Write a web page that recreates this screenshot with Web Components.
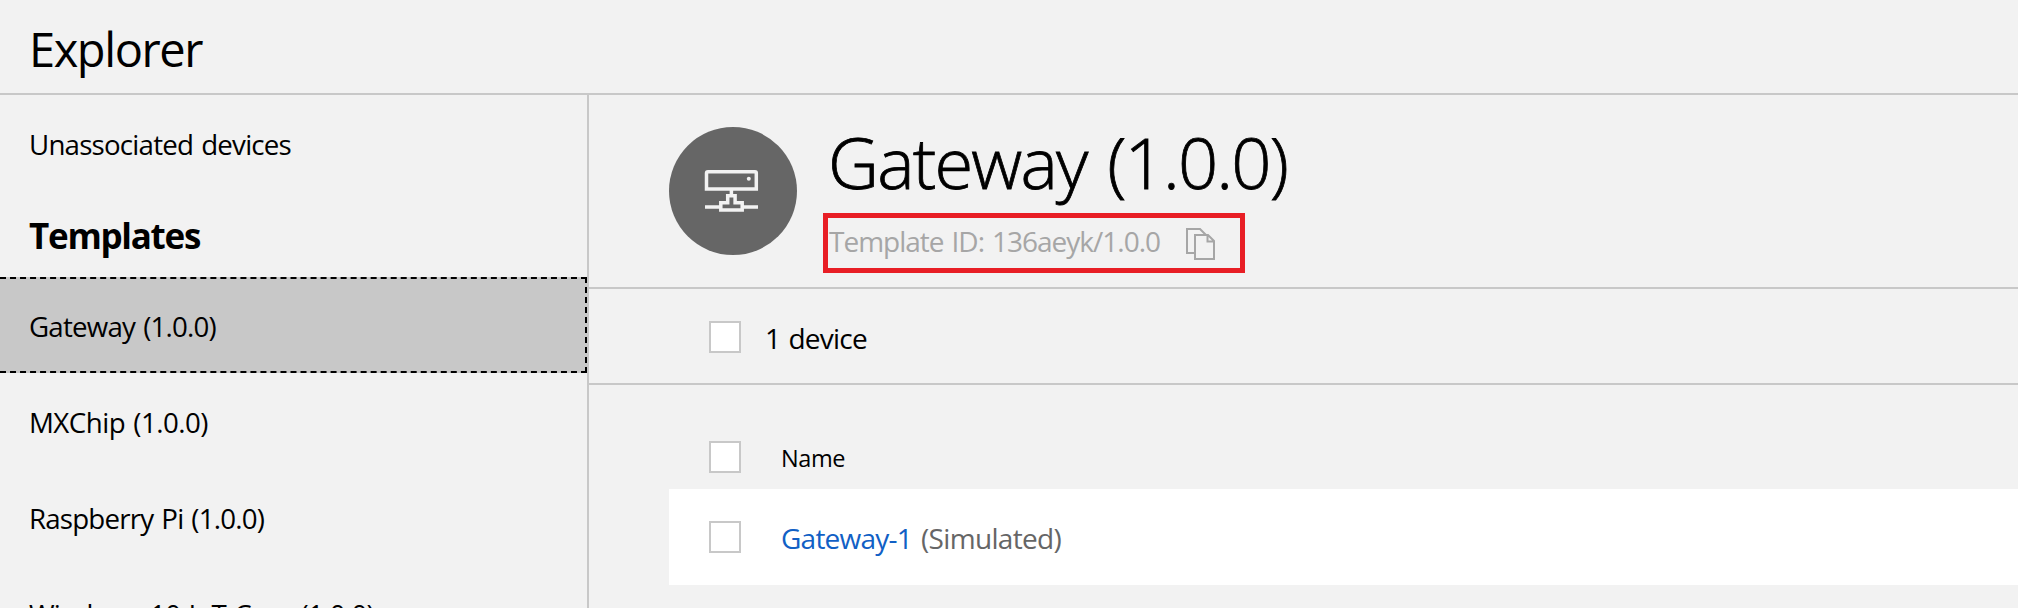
<!DOCTYPE html>
<html lang="en">
<head>
<meta charset="utf-8">
<title>Explorer</title>
<style>
  html, body { margin: 0; height: 100%; overflow: hidden; background: #f2f2f2; }
</style>
</head>
<body>
<explorer-app></explorer-app>
<script>
  const define = (name, html, setup) => {
    const template = document.createElement('template');
    template.innerHTML = html;
    customElements.define(name, class extends HTMLElement {
      connectedCallback() {
        if (this.shadowRoot) return;
        this.attachShadow({ mode: 'open' }).append(template.content.cloneNode(true));
        if (setup) setup(this);
      }
    });
  };

  define('check-box', `
    <style>
      :host { display: block; flex: none; box-sizing: border-box; width: 32px; height: 32px; border: 2px solid #c8c8c8; background: #fff; }
    </style>`);

  define('device-avatar', `
    <style>
      :host { display: grid; place-items: center; flex: none; width: 128px; height: 128px; border-radius: 50%; background: #666; }
      svg { display: block; width: 128px; height: 128px; }
    </style>
    <svg viewBox="669 127 128 128" fill="none" stroke="#f2f2f2" stroke-width="3.5">
      <path d="M706.5 189V173.2Q706.5 171.8 708 171.8H755Q756.3 171.8 756.3 173.2V189Z"/>
      <path d="M731.4 190V195M705 207H720M743 207H758"/>
      <path d="M720.8 202.8H727.7V195.7H735.1V202.8H742.2V210.1H720.8Z"/>
      <circle cx="748.8" cy="178.8" r="2" fill="#f2f2f2" stroke="none"/>
    </svg>`);

  define('copy-icon', `
    <style>
      :host { display: block; flex: none; width: 30px; height: 34px; }
      svg { display: block; }
    </style>
    <svg width="30" height="34" viewBox="1186 227 30 34" fill="none" stroke="#a6a6a6" stroke-width="2">
      <path d="M1195 253H1187V229H1200L1206 235"/>
      <path d="M1195 235H1208L1214 241V259H1195ZM1207.5 235V241.5H1214"/>
    </svg>`);

  define('nav-item', `
    <style>
      :host { display: flex; align-items: center; box-sizing: border-box; height: 96px; padding: 2px 0 0 29px; font-size: 27.7px; line-height: 38px; }
      :host([selected]) { background: #c8c8c8; border: 2px dashed #000; border-left: 0; }
    </style>
    <slot></slot>`);

  define('nav-heading', `
    <style>
      :host { display: block; box-sizing: border-box; height: 86px; padding: 25px 0 0 29px; font-size: 35px; font-weight: 700; line-height: 40px; }
    </style>
    <slot></slot>`);

  define('template-id', `
    <style>
      :host { display: flex; box-sizing: border-box; width: 422px; height: 60px; border: 5px solid #e81e25; padding: 4px 0 0 1px; color: #a6a6a6; font-size: 28px; line-height: 38px; }
      copy-icon { margin: 5px 0 0 26px; }
    </style>
    <slot></slot><copy-icon></copy-icon>`);

  define('template-header', `
    <style>
      :host { display: flex; box-sizing: border-box; height: 194px; padding: 32px 0 0 80px; border-bottom: 2px solid #c8c8c8; }
      .text { margin-left: 26px; }
      .title { height: 86px; padding: 1px 0 0 5px; box-sizing: border-box; font-size: 70.5px; font-weight: 300; line-height: 69px; -webkit-text-stroke: 0.8px #000; }
    </style>
    <device-avatar></device-avatar>
    <div class="text"><div class="title"><slot name="title"></slot></div><slot></slot></div>`);

  define('count-bar', `
    <style>
      :host { display: flex; box-sizing: border-box; height: 96px; padding: 32px 0 0 120px; border-bottom: 2px solid #c8c8c8; font-size: 28px; line-height: 38px; }
      div { margin-left: 24px; margin-top: -2px; }
    </style>
    <check-box></check-box><div><slot></slot></div>`);

  define('table-head', `
    <style>
      :host { display: flex; box-sizing: border-box; height: 104px; padding: 56px 0 0 120px; font-size: 23.5px; line-height: 32px; }
      div { margin-left: 40px; padding-top: 1px; }
    </style>
    <check-box></check-box><div><slot></slot></div>`);

  define('device-row', `
    <style>
      :host { display: flex; box-sizing: border-box; height: 96px; margin-left: 80px; padding: 32px 0 0 40px; background: #fff; color: #666; font-size: 28px; line-height: 38px; }
      div { display: flex; margin-left: 40px; margin-top: -2px; }
      ::slotted([slot=name]) { color: #1160c5; }
      ::slotted([slot=kind]) { margin-left: 9px; }
    </style>
    <check-box></check-box><div><slot name="name"></slot><slot name="kind"></slot></div>`);

  define('explorer-app', `
    <style>
      :host { display: grid; grid-template: 95px 513px / 589px 1fr; width: 2018px; height: 608px; overflow: hidden; background: #f2f2f2; color: #000; font-family: "Open Sans", "Noto Sans", sans-serif; }
      header { grid-column: 1 / -1; box-sizing: border-box; border-bottom: 2px solid #c8c8c8; padding: 19px 0 0 29px; font-size: 47px; line-height: 60px; }
      nav { border-right: 2px solid #c8c8c8; overflow: hidden; }
      main { overflow: hidden; }
    </style>
    <header><fit-label fit="173">Explorer</fit-label></header>
    <nav>
      <nav-item><fit-label fit="262">Unassociated devices</fit-label></nav-item>
      <nav-heading><fit-label fit="171">Templates</fit-label></nav-heading>
      <nav-item selected><fit-label fit="187">Gateway (1.0.0)</fit-label></nav-item>
      <nav-item><fit-label fit="179">MXChip (1.0.0)</fit-label></nav-item>
      <nav-item><fit-label fit="235">Raspberry Pi (1.0.0)</fit-label></nav-item>
      <nav-item><fit-label fit="345">Windows 10 IoT Core (1.0.0)</fit-label></nav-item>
    </nav>
    <main>
      <template-header>
        <fit-label slot="title" fit="459">Gateway (1.0.0)</fit-label>
        <template-id><fit-label fit="331">Template ID: 136aeyk/1.0.0</fit-label></template-id>
      </template-header>
      <count-bar><fit-label fit="102">1 device</fit-label></count-bar>
      <table-head><fit-label fit="64">Name</fit-label></table-head>
      <device-row><fit-label slot="name" fit="131">Gateway-1</fit-label><fit-label slot="kind" fit="140">(Simulated)</fit-label></device-row>
    </main>`);

  // Single-line label; "fit" spreads the tracking so the label takes that many pixels.
  // Defined last, so that every label already sits in its styled parent when it is measured.
  define('fit-label', `
    <style>
      :host { display: block; white-space: nowrap; word-spacing: 0.06em; }
      span { display: inline-block; }
    </style>
    <span><slot></slot></span>`, host => {
      const span = host.shadowRoot.querySelector('span');
      const fit = Number(host.getAttribute('fit'));
      const gap = (fit - span.getBoundingClientRect().width) / host.textContent.length;
      span.style.letterSpacing = gap.toFixed(3) + 'px';
    });
</script>
</body>
</html>
